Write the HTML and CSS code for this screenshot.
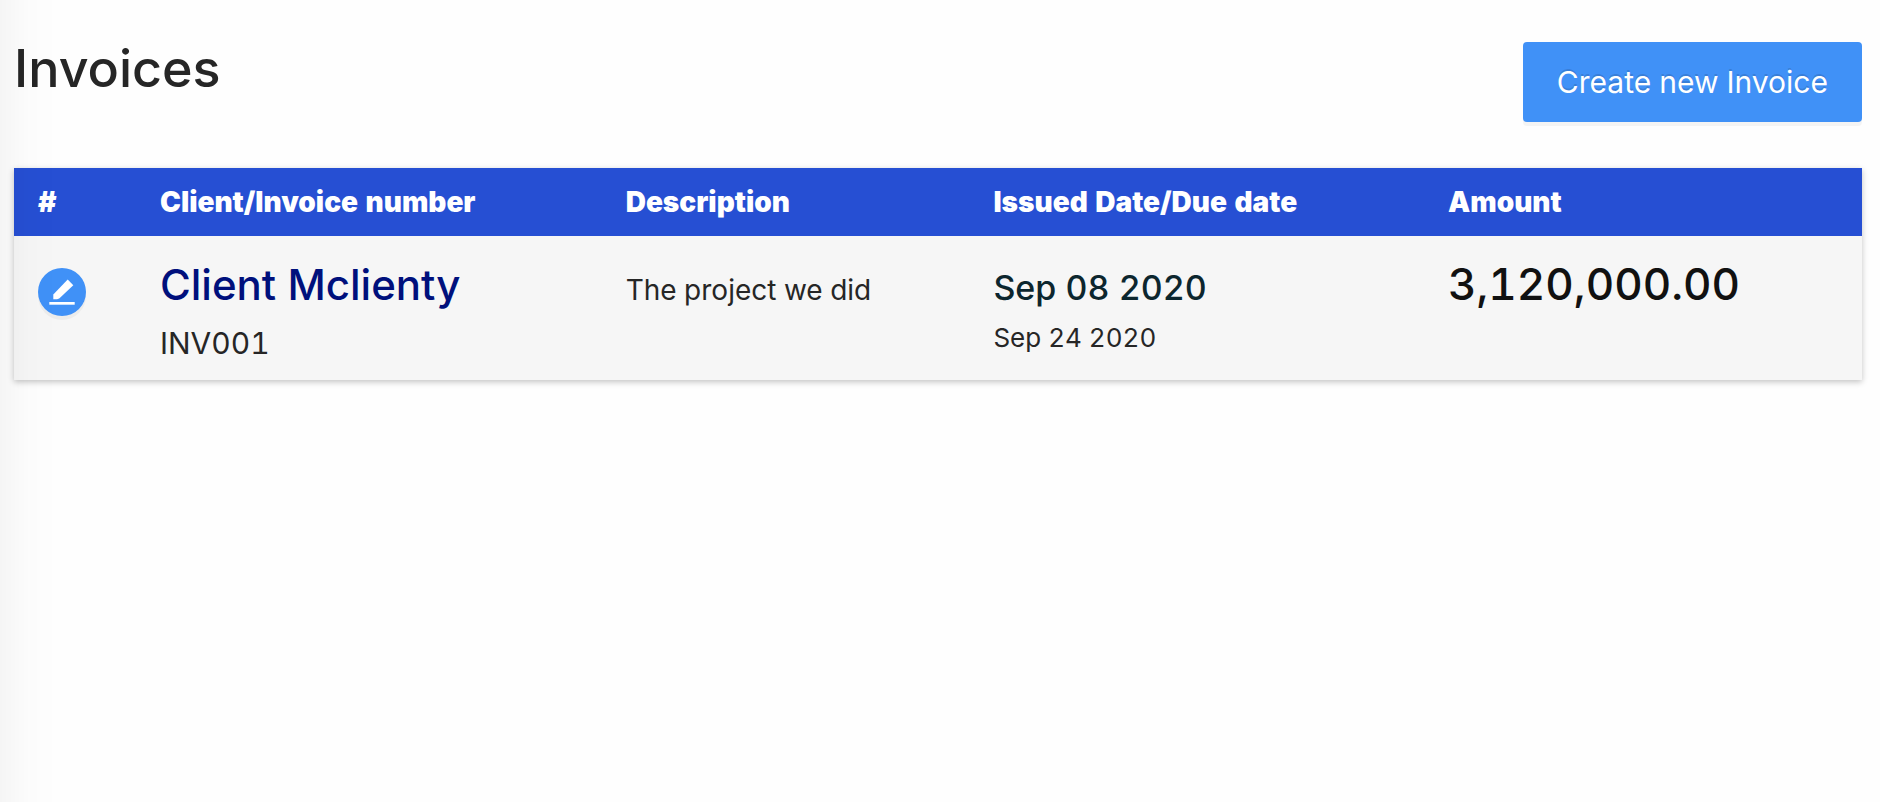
FILE: index.html
```html
<!DOCTYPE html>
<html lang="en">
<head>
<meta charset="utf-8">
<title>Invoices</title>
<link rel="stylesheet" href="styles.css">
</head>
<body>
<main class="page">
  <header class="page-header">
    <h1 class="page-title">Invoices</h1>
    <button class="button-primary" type="button">Create new Invoice</button>
  </header>
  <table class="invoices">
    <colgroup>
      <col class="col-action"><col class="col-client"><col class="col-description"><col class="col-dates"><col class="col-amount">
    </colgroup>
    <thead>
      <tr>
        <th scope="col">#</th>
        <th scope="col">Client/Invoice number</th>
        <th scope="col">Description</th>
        <th scope="col">Issued Date/Due date</th>
        <th scope="col">Amount</th>
      </tr>
    </thead>
    <tbody>
      <tr>
        <td class="cell-action">
          <button class="button-edit" type="button" aria-label="Edit invoice">
            <svg class="icon" viewBox="0 0 48 48" aria-hidden="true">
              <path d="M15.3 31.2V26.6L29.7 11.6L35.3 17.2L21.2 30.4Q18.4 31.6 15.3 31.2Z"/>
              <path d="M11.3 34h25.4v2.7H11.3z"/>
            </svg>
          </button>
        </td>
        <td>
          <div class="client">Client Mclienty</div>
          <div class="number">INV001</div>
        </td>
        <td class="description">The project we did</td>
        <td>
          <div class="issued">Sep 08 2020</div>
          <div class="due">Sep 24 2020</div>
        </td>
        <td class="amount">3,120,000.00</td>
      </tr>
    </tbody>
  </table>
</main>
</body>
</html>
```
FILE: styles.css
```css
* {
  box-sizing: border-box;
}

body {
  margin: 0;
  min-height: 100vh;
  background: #fefefe;
  color: #262626;
  font-family: Inter, "Liberation Sans", sans-serif;
  font-variant-numeric: tabular-nums;
}

body::before {
  content: "";
  position: fixed;
  inset: 0 auto 0 0;
  width: 60px;
  background: linear-gradient(to right, rgba(0, 0, 0, 0.035), rgba(0, 0, 0, 0.008) 50%, rgba(0, 0, 0, 0));
  pointer-events: none;
}

.page {
  padding: 42px 18px 42px 14px;
}

.page-header {
  display: flex;
  justify-content: space-between;
  align-items: flex-start;
  margin-bottom: 46px;
}

.page-title {
  margin: 0;
  font-size: 52px;
  font-weight: 500;
  line-height: 54px;
}

.button-primary {
  height: 80px;
  padding: 0 34px;
  border: 0;
  border-radius: 4px;
  background: #4091f7;
  box-shadow: 0 4px 0 rgba(0, 0, 0, 0.04);
  color: #fff;
  font: inherit;
  font-size: 30px;
  text-shadow: 0 -2px 0 rgba(0, 0, 0, 0.12);
}

.invoices {
  width: 100%;
  table-layout: fixed;
  border-collapse: collapse;
  background: #f6f6f6;
  box-shadow: 0 2px 6px rgba(0, 0, 0, 0.24);
}

.col-action { width: 6.6%; }
.col-client { width: 25.2%; }
.col-description { width: 19.9%; }
.col-dates { width: 24.6%; }
.col-amount { width: 23.7%; }

.invoices th {
  height: 68px;
  padding: 0 24px;
  background: #264fd3;
  color: #fff;
  font-size: 28px;
  font-weight: 900;
  text-align: left;
}

.invoices td {
  padding: 24px 24px 11px;
  vertical-align: baseline;
  line-height: 48px;
}

.invoices .cell-action {
  padding-top: 32px;
  vertical-align: top;
}

.button-edit {
  display: block;
  width: 48px;
  height: 48px;
  padding: 0;
  border: 0;
  border-radius: 50%;
  background: #4091f7;
  box-shadow: 0 4px 0 rgba(0, 0, 0, 0.04);
}

.icon {
  display: block;
  width: 48px;
  height: 48px;
  fill: #fff;
}

.client {
  margin-bottom: 8px;
  color: #00107c;
  font-size: 42px;
  font-weight: 500;
}

.number {
  font-size: 30px;
  line-height: 52px;
}

.description {
  font-size: 28px;
}

.issued {
  color: #0c262e;
  font-size: 34px;
  font-weight: 500;
}

.due {
  font-size: 26px;
  line-height: 52px;
}

.invoices .amount {
  color: #111;
  font-size: 44px;
  font-weight: 500;
}
```
